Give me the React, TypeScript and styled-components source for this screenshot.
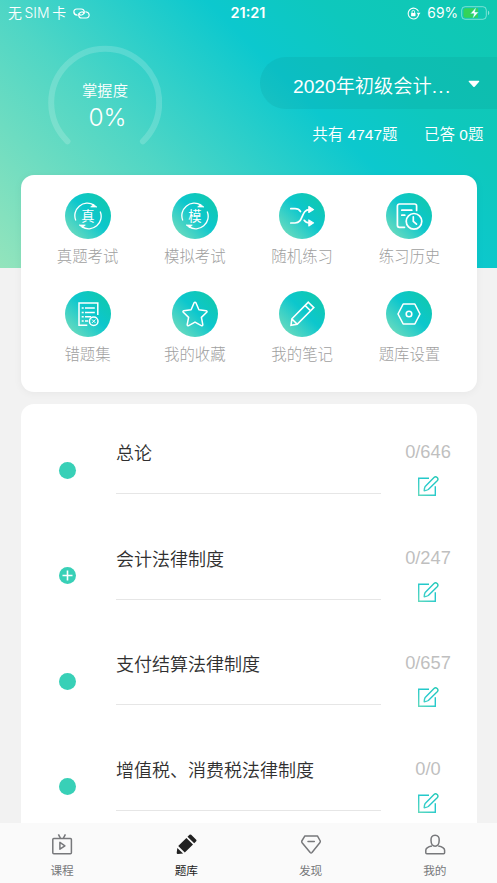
import React from "react";
import styled, { createGlobalStyle } from "styled-components";

const GlobalStyle = createGlobalStyle`
  * { box-sizing: border-box; }
  html, body { margin: 0; padding: 0; }
  body {
    width: 497px;
    height: 883px;
    overflow: hidden;
    background: #f2f2f2;
    font-family: "Liberation Sans", "Noto Sans CJK SC", sans-serif;
    font-weight: 400;
  }
  svg { display: block; flex: none; }
`;

const Screen = styled.div`
  display: flex;
  flex-direction: column;
  width: 497px;
  height: 883px;
  overflow: hidden;
  background: #f2f2f2;
`;

const Header = styled.header`
  flex: none;
  height: 267.5px;
  background: linear-gradient(45deg, #93e4bc 0%, #4fd6c5 34%, #0cc8ce 62%, #0ec8bd 77%, #10c8b0 100%);
  color: #fff;
`;

const StatusBar = styled.div`
  display: grid;
  grid-template-columns: 1fr auto 1fr;
  align-items: center;
  height: 26px;
  padding: 0 7px 0 8px;
  font-family: Inter, "Noto Sans CJK SC", sans-serif;
  font-size: 13.9px;
  line-height: 26px;
`;

const StatusGroup = styled.div<{ $end?: boolean }>`
  display: flex;
  align-items: center;
  justify-content: ${(p) => (p.$end ? "flex-end" : "flex-start")};
  white-space: pre;
`;

const Carrier = styled.span`
  margin-right: 7px;
  word-spacing: -1.2px;
  font-weight: 350;
`;

const Clock = styled.span`
  position: relative;
  left: -1px;
  font-weight: 600;
  font-size: 14.5px;
`;

const BatteryText = styled.span`
  margin: 0 3px 0 6px;
  font-size: 13.8px;
`;

const Summary = styled.div`
  display: flex;
  justify-content: space-between;
  padding-left: 48px;
`;

const Gauge = styled.div`
  display: grid;
  width: 114px;
  height: 114px;
  margin-top: 19px;
  > * { grid-area: 1 / 1; }
`;

const GaugeText = styled.div`
  display: flex;
  flex-direction: column;
  align-items: center;
  padding-top: 34px;
`;

const GaugeLabel = styled.span`
  font-size: 15.3px;
  font-weight: 350;
  line-height: 24px;
`;

const GaugeValue = styled.span`
  padding-left: 5px;
  font-family: Inter, sans-serif;
  font-size: 24.5px;
  font-weight: 350;
  line-height: 29px;
`;

const Course = styled.div`
  width: 237px;
  padding-top: 31px;
`;

const CoursePicker = styled.div`
  display: flex;
  align-items: center;
  height: 52px;
  padding-left: 33px;
  border-radius: 26px 0 0 26px;
  background: rgba(10, 120, 120, 0.12);
  font-size: 19.2px;
  font-weight: 350;
  white-space: nowrap;
  svg { margin: 2px 0 0 16px; }
`;

const CourseName = styled.span`
  padding-top: 4px;
`;

const Ellipsis = styled.span`
  letter-spacing: 1.3px;
`;

const Stats = styled.div`
  display: flex;
  justify-content: flex-end;
  gap: 26.5px;
  padding: 13px 13.5px 0 0;
  font-size: 15.5px;
  font-weight: 350;
  line-height: 25px;
  white-space: nowrap;
`;

const Card = styled.section`
  flex: none;
  margin: 0 20.5px;
  background: #fff;
`;

const MenuCard = styled(Card)`
  display: grid;
  grid-template-columns: repeat(4, 107.3px);
  grid-auto-rows: 98px;
  justify-content: center;
  height: 217px;
  margin-top: -92.5px;
  padding-top: 18px;
  border-radius: 13px;
  box-shadow: 0 1px 8px rgba(0, 0, 0, 0.05);
`;

const MenuItem = styled.div`
  display: flex;
  flex-direction: column;
  align-items: center;
  font-size: 15.4px;
  line-height: 24px;
`;

const MenuLabel = styled.span`
  margin-top: 6px;
  font-weight: 300;
  color: #a0a0a0;
`;

const Disc = styled.div`
  display: flex;
  align-items: center;
  justify-content: center;
  width: 46px;
  height: 46px;
  border-radius: 50%;
  background: linear-gradient(45deg, #6fdcbe 8%, #0cc7cd 54%, #10c8b0 88%);
`;

const ListCard = styled(Card)`
  flex: 1;
  min-height: 0;
  margin-top: 12px;
  padding-top: 14px;
  overflow: hidden;
  border-radius: 13px 13px 0 0;
`;

const Row = styled.div`
  display: grid;
  grid-template-columns: 95.5px 265px 94px;
  height: 105.5px;
`;

const DotCell = styled.div`
  display: flex;
  justify-content: center;
  padding: 43.5px 1px 0 0;
`;

const Dot = styled.div`
  width: 17px;
  height: 17px;
  border-radius: 50%;
  background: #38d0b7;
`;

const RowTitle = styled.div`
  height: 76px;
  border-bottom: 1px solid #e6e6e6;
  color: #303030;
  font-size: 18px;
  font-weight: 350;
  line-height: 72px;
  white-space: nowrap;
`;

const RowSide = styled.div`
  display: flex;
  flex-direction: column;
  align-items: center;
`;

const Count = styled.span`
  margin-top: 22px;
  color: #bfbfbf;
  font-size: 18.3px;
  line-height: 24px;
`;

const EditIcon = styled.svg`
  margin-top: 11px;
`;

const TabBar = styled.nav`
  flex: none;
  display: grid;
  grid-template-columns: repeat(4, 1fr);
  height: 60.5px;
  background: #fafafa;
`;

const Tab = styled.div<{ $active?: boolean }>`
  display: flex;
  flex-direction: column;
  align-items: center;
  padding-top: 10px;
  color: ${(p) => (p.$active ? "#222" : "#77787b")};
  font-size: 11.7px;
  line-height: 18px;
`;

const TabLabel = styled.span`
  margin-top: 5px;
`;

const CycleChar = ({ char }: { char: string }) => (
  <svg width="28" height="28" viewBox="0 0 28 28" fill="none" stroke="#fff" strokeWidth="1.3">
    <path d="M1.8 18.5A12.5 12.5 0 0 1 20 3.1M26.2 9.5A12.5 12.5 0 0 1 8 24.9" />
    <path d="M16.6 5.1H23L19.4 2.3ZM11.4 22.9H5L8.6 25.7Z" fill="#fff" strokeWidth=".6" />
    <text x="14" y="18.7" textAnchor="middle" fontSize="13.3" fontWeight="400" fill="#fff" stroke="none" fontFamily="Noto Sans CJK SC, sans-serif">{char}</text>
  </svg>
);

const strokeProps = { width: 28, height: 28, viewBox: "0 0 28 28", fill: "none", stroke: "#fff", strokeWidth: 1.5 } as const;

const Shuffle = () => (
  <svg {...strokeProps} strokeWidth={1.7} strokeLinecap="round">
    <path d="M2.8 6.7H7c3 0 4.4 1 5.5 2.8M2.8 21H7c9 0 5.5-13.3 14.5-13.3M16.2 18.3c1.2 1.9 2.8 2.6 5.3 2.6" />
    <path d="M20.8 4.5 25.6 7.6l-4.8 2.9ZM20.8 17.9l4.8 3-4.8 3.1Z" fill="#fff" strokeWidth="1.1" strokeLinejoin="round" />
  </svg>
);

const History = () => (
  <svg {...strokeProps} strokeWidth={1.7} strokeLinecap="round">
    <path d="M9.5 25.3H4.4a2 2 0 0 1-2-2V4a2 2 0 0 1 2-2h15.2a2 2 0 0 1 2 2v4.5M6.8 8.2h10M6.8 13.2h3" />
    <circle cx="19" cy="19.3" r="7.8" />
    <path d="M18.3 14.8v4.5l3.2 2.8" />
  </svg>
);

const Mistakes = () => (
  <svg {...strokeProps} strokeWidth={1.5}>
    <path d="M13.3 25.2H5V3h18.8v12" />
    <path d="M11 8h9.8M11 12.4h9.8M11 16.8h6M11 21h3" />
    <path d="M7.7 8h2M7.7 12.4h2M7.7 16.8h2M7.7 21h2" />
    <circle cx="19.7" cy="21.2" r="4.3" />
    <path d="m18 19.5 3.4 3.4m0-3.4L18 22.9" strokeWidth="1" />
  </svg>
);

const Star = () => (
  <svg {...strokeProps} strokeLinejoin="round">
    <path d="M13.1 2.8q.9-1.3 1.8 0l3 6.9 7.3 1q1.4.5.5 1.6l-5.3 5.1 1.4 7.3q-.1 1.5-1.5.9L14 22.1l-6.3 3.5q-1.4.6-1.5-.9l1.4-7.3-5.3-5.1q-.9-1.1.5-1.6l7.3-1Z" />
  </svg>
);

const Pencil = () => (
  <svg {...strokeProps} strokeWidth={1.6} strokeLinejoin="miter">
    <path d="m20.3 2.2 5.5 5.4L9.2 24.2 3 25.2l.9-6.4ZM17 5.4l5.5 5.4M4 19l5 5" />
  </svg>
);

const Settings = () => (
  <svg {...strokeProps} strokeWidth={1.6} strokeLinejoin="round">
    <path d="M8.2 4h11.6l5.2 10-5.2 10H8.2L3 14Z" />
    <circle cx="14" cy="14" r="2.8" />
  </svg>
);

const Edit = () => (
  <EditIcon width="22" height="22" viewBox="0 0 22 22" fill="none" stroke="url(#editTint)" strokeWidth="1.4">
    <defs>
      <linearGradient id="editTint" gradientUnits="userSpaceOnUse" x1="1" y1="21" x2="21" y2="1">
        <stop offset="0" stopColor="#63dabd" />
        <stop offset=".55" stopColor="#22c8cd" />
        <stop offset="1" stopColor="#28cbb4" />
      </linearGradient>
    </defs>
    <path d="M12 3.2H1.7v17.1h16.6V11.2" />
    <path d="m8.2 11.4 8.8-8.8a2.2 2.2 0 0 1 3.2 3.1l-8.9 8.8q-1.3.9-4.1 1.2.1-2.8 1-4.3Z" strokeLinejoin="round" />
  </EditIcon>
);

const tabSvg = { width: 24, height: 24, viewBox: "0 0 24 24", fill: "none", stroke: "currentColor", strokeWidth: 1.5 } as const;

const CourseTab = () => (
  <svg {...tabSvg} strokeLinejoin="round">
    <rect x="2.8" y="5.4" width="18.6" height="15.3" rx="1" />
    <path d="m8.4 1.3 2 3.9m5-3.9-2 3.9M9.9 9.4v6.8l5-3.4Z" />
  </svg>
);

const BankTab = () => (
  <svg {...tabSvg} fill="currentColor" stroke="none">
    <path d="m17.2 1.8 5 4.9q.7.8 0 1.6l-2 2-6.7-6.5 2-2q.9-.7 1.7 0ZM12.4 4.9l6.6 6.5-8.2 8.2-6.6-6.5ZM3.3 14.9l5.8 5.7-5.1.4q-1.4.1-1.3-1.2Z" />
  </svg>
);

const DiscoverTab = () => (
  <svg {...tabSvg} strokeLinejoin="round">
    <path d="M5.9 2.9h12.5l2.9 5.1q.2 1-.5 1.8L13 19.5q-.9.9-1.8 0L3.1 9.8Q2.5 9 2.8 8Z" />
    <path d="M9 8.6h6.3" strokeLinecap="round" />
  </svg>
);

const MineTab = () => (
  <svg {...tabSvg}>
    <path d="M12.1 2.2c-3 0-4.2 2.2-4.1 5.1.1 3.5 1.4 5.9 4.1 5.9s4-2.4 4.1-5.9c.1-2.9-1.1-5.1-4.1-5.1Z" />
    <path d="M9 12.9c-3.8.7-6.2 2.1-6.2 4.4v2.5q0 1 1 1h16.8q1 0 1-1v-2.5c0-2.3-2.5-3.7-6.4-4.4" />
  </svg>
);

const menu = [
  { label: "真题考试", icon: <CycleChar char="真" /> },
  { label: "模拟考试", icon: <CycleChar char="模" /> },
  { label: "随机练习", icon: <Shuffle /> },
  { label: "练习历史", icon: <History /> },
  { label: "错题集", icon: <Mistakes /> },
  { label: "我的收藏", icon: <Star /> },
  { label: "我的笔记", icon: <Pencil /> },
  { label: "题库设置", icon: <Settings /> },
];

const chapters = [
  { title: "总论", count: "0/646" },
  { title: "会计法律制度", count: "0/247", expandable: true },
  { title: "支付结算法律制度", count: "0/657" },
  { title: "增值税、消费税法律制度", count: "0/0" },
];

const tabs = [
  { label: "课程", icon: <CourseTab /> },
  { label: "题库", icon: <BankTab />, active: true },
  { label: "发现", icon: <DiscoverTab /> },
  { label: "我的", icon: <MineTab /> },
];

export default function App() {
  return (
    <>
      <GlobalStyle />
      <Screen>
        <Header>
          <StatusBar>
            <StatusGroup>
              <Carrier>无 SIM 卡</Carrier>
              <svg width="17" height="11" viewBox="0 0 17 11" fill="none" stroke="#fff" strokeWidth="1.2" strokeLinecap="round">
                <path d="M4.2 7.2C-.3 6.6-.1 1 3.8 1h4.4c3.6 0 4.2 4.6 1 5.8-1.3.4-2.8-.1-3.2-1.1" />
                <path d="M12.8 3.8c4.5.6 4.3 6.2.4 6.2H8.8c-3.6 0-4.2-4.6-1-5.8 1.3-.4 2.8.1 3.2 1.1" />
              </svg>
            </StatusGroup>
            <Clock>21:21</Clock>
            <StatusGroup $end>
              <svg width="14" height="13" viewBox="0 0 14 13" fill="none" stroke="#fff" strokeWidth="1.1">
                <path d="M11.5 4.4A5.4 5.4 0 1 0 9.6 11" />
                <path d="M9.7 5.7h3.8l-1.9 2.7Z" fill="#fff" stroke="none" />
                <path d="M11.6 6.3a5.4 5.4 0 0 1-2 4.7" />
                <rect x="4.1" y="5.9" width="4.4" height="3.3" rx=".4" fill="#fff" stroke="none" />
                <path d="M5 6V4.7a1.3 1.3 0 0 1 2.6 0V6" strokeWidth=".9" />
              </svg>
              <BatteryText>69%</BatteryText>
              <svg width="29" height="14" viewBox="0 0 29 14">
                <rect x=".7" y=".7" width="24.6" height="12.6" rx="3.4" fill="none" stroke="#fff" strokeOpacity=".45" />
                <path d="M4.5 2.3H17v9.4H4.5a2 2 0 0 1-2-2V4.3a2 2 0 0 1 2-2Z" fill="#33d35a" />
                <path d="M27 4.8c1.7.6 1.7 3.8 0 4.4Z" fill="#fff" fillOpacity=".5" />
                <path d="m15.3 1-6 6.7h3.7L11.4 13l6.2-7h-3.7Z" fill="#fff" stroke="#1bc9ab" strokeWidth=".5" />
              </svg>
            </StatusGroup>
          </StatusBar>
          <Summary>
            <Gauge>
              <svg width="114" height="114" viewBox="0 0 114 114" fill="none">
                <path d="M19.5 96.3A54 54 0 1 1 94.9 96.3" stroke="#fff" strokeOpacity=".17" strokeWidth="6" strokeLinecap="round" />
              </svg>
              <GaugeText>
                <GaugeLabel>掌握度</GaugeLabel>
                <GaugeValue>0%</GaugeValue>
              </GaugeText>
            </Gauge>
            <Course>
              <CoursePicker>
                <CourseName>
                  2020年初级会计<Ellipsis>...</Ellipsis>
                </CourseName>
                <svg width="12" height="8" viewBox="0 0 12 8"><path d="M1.2.7h9.6q.9.2.3 1L6.7 6.8q-.7.6-1.4 0L.8 1.7Q.2.9 1.2.7Z" fill="#fff" /></svg>
              </CoursePicker>
              <Stats>
                <span>共有 4747题</span>
                <span>已答 0题</span>
              </Stats>
            </Course>
          </Summary>
        </Header>
        <MenuCard>
          {menu.map((m) => (
            <MenuItem key={m.label}>
              <Disc>{m.icon}</Disc>
              <MenuLabel>{m.label}</MenuLabel>
            </MenuItem>
          ))}
        </MenuCard>
        <ListCard>
          {chapters.map((c) => (
            <Row key={c.title}>
              <DotCell>
                <Dot>
                  {c.expandable && (
                    <svg width="17" height="17" viewBox="0 0 17 17" stroke="#fff" strokeWidth="1.6">
                      <path d="M8.5 3.5v10M3.5 8.5h10" />
                    </svg>
                  )}
                </Dot>
              </DotCell>
              <RowTitle>{c.title}</RowTitle>
              <RowSide>
                <Count>{c.count}</Count>
                <Edit />
              </RowSide>
            </Row>
          ))}
        </ListCard>
        <TabBar>
          {tabs.map((t) => (
            <Tab key={t.label} $active={t.active}>
              {t.icon}
              <TabLabel>{t.label}</TabLabel>
            </Tab>
          ))}
        </TabBar>
      </Screen>
    </>
  );
}
